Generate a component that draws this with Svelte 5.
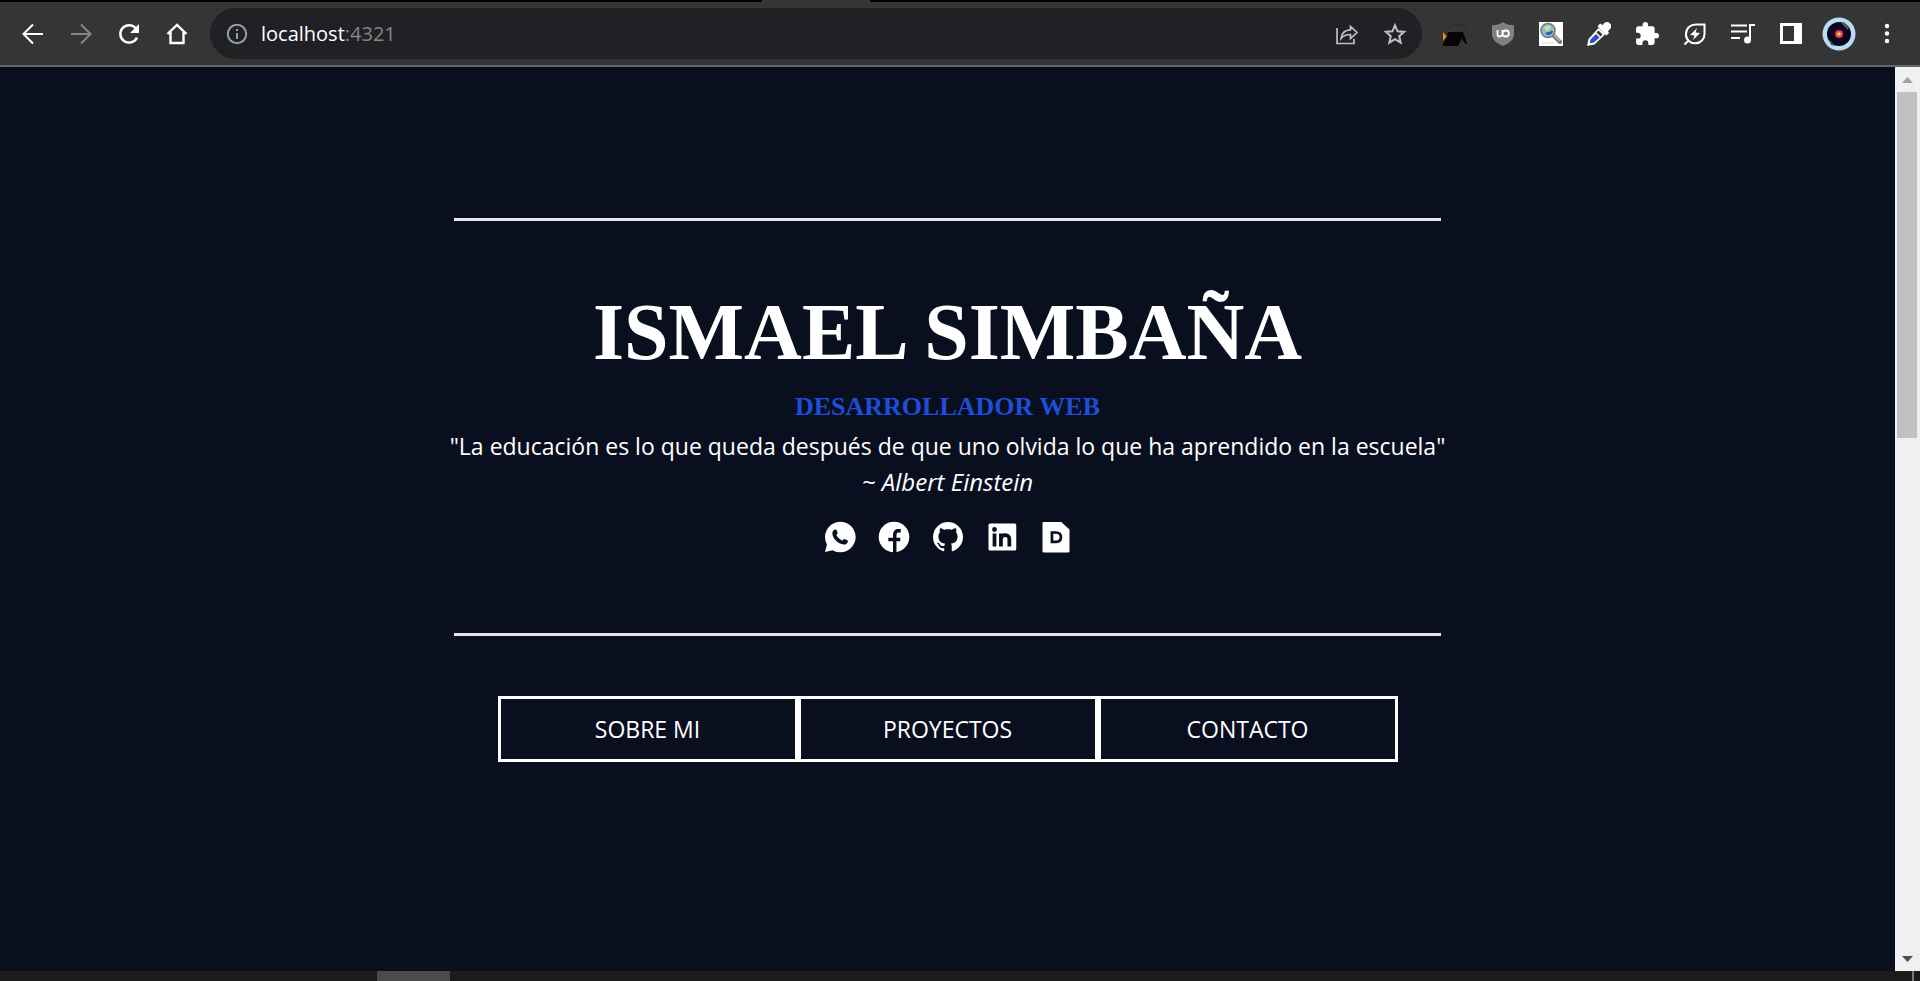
<script>
  const sections = ['SOBRE MI', 'PROYECTOS', 'CONTACTO'];
</script>

<div class="window">
  <div class="tabs"><span></span></div>
  <header class="toolbar">
    <button class="tool" aria-label="Atrás">
      <svg viewBox="0 0 24 24" class="line"><path d="M22 12H3M12 2.500 2.500 12l9.500 9.500" /></svg>
    </button>
    <button class="tool dim" aria-label="Adelante">
      <svg viewBox="0 0 24 24" class="line"><path d="M2 12h19M12 2.500 21.500 12 12 21.500" /></svg>
    </button>
    <button class="tool" aria-label="Recargar">
      <svg viewBox="0 0 24 24" class="line"><path d="M20 15.500A8.700 8.700 0 1 1 18.500 6" stroke-width="2.500" /><path d="M22 2v9h-9z" fill="currentColor" stroke="none" /></svg>
    </button>
    <button class="tool" aria-label="Inicio">
      <svg viewBox="0 0 24 24" class="line"><path d="M2.500 12 12 3l9.500 9M5.500 10v11h13V10" stroke-width="2.400" /></svg>
    </button>

    <div class="address">
      <svg viewBox="0 0 24 24" class="line info"><circle cx="12" cy="12" r="9.200" /><path d="M12 11v6M12 7v2" /></svg>
      <a href="http://localhost:4321">localhost<span>:4321</span></a>
      <button class="tool soft" aria-label="Compartir">
        <svg viewBox="0 0 24 24" class="line"><path d="M2 7v15.500h17V18M6 17.500c.6-5.500 4-8.500 9.500-8.700V5.500l6.500 6-6.500 6v-4C11.500 13.500 8.500 14.500 6 17.500z" stroke-width="1.700" transform="translate(0 -1)" /></svg>
      </button>
      <button class="tool soft" aria-label="Marcador">
        <svg viewBox="0 0 24 24" class="line"><path d="m12 3.300 2.600 6 6.500.600-4.900 4.300 1.500 6.400-5.700-3.400-5.700 3.400 1.500-6.400-4.900-4.300 6.500-.600z" stroke-width="2" /></svg>
      </button>
    </div>

    <button class="tool" aria-label="Extensión">
      <svg viewBox="0 0 24 24"><path d="M0 10l3.500 4.500L0 19z" fill="#f5870a" /><path d="M0 24v-3l4.500-7V10.500L6 10h14l4 11v1l-1.500-.5-4-5L15 24z" fill="#050505" /><path d="M2 10 10 2l10 1 3 7" stroke="#2b2b2b" fill="none" /></svg>
    </button>
    <button class="tool" aria-label="uBlock">
      <svg viewBox="0 0 24 24"><path d="M12 0c3 2.500 6.500 3.200 11 3.200V12c0 5.500-4 9-11 12C5 21 1 17.500 1 12V3.200C5.500 3.200 9 2.500 12 0z" fill="#808080" /><path d="M6.500 8v4.200q0 2.300 2.300 2.300t2.700-2.300V8M11.500 11.500q0-3 3.200-3t3.200 3-3.200 3-3.200-3z" fill="none" stroke="#fff" stroke-width="1.800" /></svg>
    </button>
    <button class="tool" aria-label="Buscar imagen">
      <svg viewBox="0 0 24 24"><path fill="#fff" d="M0 0h24v24H0z" /><path d="m14 13 7 7" stroke="#777" stroke-width="4" stroke-linecap="round" /><path d="m15 13 6 6" stroke="#bbb" stroke-width="1.500" /><circle cx="9" cy="8.500" r="7" fill="#8fb9d8" stroke="#777" stroke-width="1.500" /><path d="M5 5q4-3 7 0l-2 3-3 1z" fill="#cce38e" /><path d="M7 11q4 2 6-2" stroke="#245fa8" stroke-width="2.500" fill="none" /><path d="M2 21h13" stroke="#ddd" /></svg>
    </button>
    <button class="tool" aria-label="Cuentagotas">
      <svg viewBox="0 0 24 24"><path d="M13 1.500 15.500 3l2-2.300Q20.500-.8 23 1.500t.5 5L21 9l1 2-2.500 2.500-9-9z" fill="#fff" /><path d="M11.500 6 1.500 17 0 24l7.500-1.500L18.500 12z" fill="#fff" /><path d="m11.500 8.500 4 4-2 2-4-4z" fill="#353535" /><path d="m9 12 3.500 3.500L7 20.500l-3.500.8-.7-.7.7-3.100z" fill="#3049c9" /></svg>
    </button>
    <button class="tool" aria-label="Extensiones">
      <svg viewBox="1 1 22 22"><path fill="currentColor" d="M20.500 11H19V7c0-1.100-.9-2-2-2h-4V3.500a2.500 2.500 0 0 0-5 0V5H4c-1.100 0-2 .9-2 2v3.800h1.500a2.700 2.700 0 0 1 0 5.400H2V20c0 1.100.9 2 2 2h3.800v-1.500a2.700 2.700 0 0 1 5.400 0V22H17c1.100 0 2-.9 2-2v-4h1.500a2.500 2.500 0 0 0 0-5z" /></svg>
    </button>
    <button class="tool" aria-label="Ahorro de energía">
      <svg viewBox="0 0 24 24" class="line"><path d="M21.500 2.500V12a9 9 0 0 1-9 9.300A8.800 8.800 0 0 1 3 12c0-6 4.500-9.500 10-9.500zM5.500 18.500 1.500 22.500" /><path d="m14 6-7 7 4.500.500L10 18l7-7-4.500-.5z" fill="currentColor" stroke="none" /></svg>
    </button>
    <button class="tool" aria-label="Multimedia">
      <svg viewBox="0 0 24 24" class="line"><path d="M0 3.500h16M0 9.500h16M0 16h9M19 19V3h5" /><circle cx="16.500" cy="18" r="3.500" fill="currentColor" stroke="none" /></svg>
    </button>
    <button class="tool" aria-label="Panel lateral">
      <svg viewBox="0 0 24 24"><path fill="currentColor" fill-rule="evenodd" d="M1 1h22v21H1zm3 3v15h11V4z" /></svg>
    </button>
    <button class="tool" aria-label="Perfil">
      <svg viewBox="0 0 34 34" class="avatar"><circle cx="17" cy="17" r="16.500" fill="#b7dcf8" /><circle cx="17" cy="17" r="12" fill="#090416" /><path d="m19 6 3-.7 5 5-1 3zM7 22l2 6 4 1z" fill="#57505a" /><circle cx="17" cy="17" r="9" fill="#0b0720" /><circle cx="17" cy="17" r="4" fill="#e8375f" /><circle cx="17" cy="17" r="1.800" fill="#ffd83a" /></svg>
    </button>
    <button class="tool" aria-label="Menú">
      <svg viewBox="0 0 24 24" fill="currentColor"><circle cx="12" cy="4" r="2.200" /><circle cx="12" cy="11.500" r="2.200" /><circle cx="12" cy="19" r="2.200" /></svg>
    </button>
  </header>

  <div class="view">
    <main>
      <section class="hero">
        <h1>ISMAEL SIMBAÑA</h1>
        <h2>DESARROLLADOR WEB</h2>
        <p>"La educación es lo que queda después de que uno olvida lo que ha aprendido en la escuela"</p>
        <p><em>~ Albert Einstein</em></p>
        <div class="social">
          <a href="#whatsapp" aria-label="WhatsApp">
            <svg viewBox="0 0 24 24"><path fill="#fff" d="m2 22 1.300-5A10.200 10.200 0 1 1 7 20.800z" /><path fill="#0a0f20" d="M8.200 7.200 9 7c.5 0 .7.300.8.700l.6 1.600c.1.500-.9 1.200-.8 1.600a7.500 7.500 0 0 0 3.700 3.500c.5.100 1.100-1.200 1.600-1.100l2 .900c.4.200.4.500.3.900-.3 1.500-1.600 2-2.700 1.900-4-.4-7.500-4-7.600-7.300 0-1.100.5-2.100 1.300-2.500z" /></svg>
          </a>
          <a href="#facebook" aria-label="Facebook">
            <svg viewBox="0 0 24 24"><circle cx="12" cy="12" r="10.200" fill="#fff" /><path d="M12.500 23V10.500q0-2.700 2.600-2.700h1.400M8.200 13.600h8" fill="none" stroke="#0a0f20" stroke-width="2.300" /></svg>
          </a>
          <a href="#github" aria-label="GitHub">
            <svg viewBox="0 0 24 24"><path fill="#fff" d="M12 2A10 10 0 0 0 2 12c0 4.420 2.870 8.170 6.840 9.500.5.080.66-.23.66-.5v-1.690c-2.770.6-3.360-1.340-3.360-1.340-.46-1.160-1.110-1.470-1.110-1.470-.91-.62.070-.6.070-.6 1 .070 1.530 1.030 1.530 1.030.87 1.520 2.340 1.070 2.910.83.090-.65.350-1.090.63-1.340-2.220-.25-4.550-1.110-4.550-4.920 0-1.110.38-2 1.030-2.710-.1-.25-.45-1.290.1-2.640 0 0 .84-.27 2.750 1.020.79-.22 1.650-.33 2.500-.33.850 0 1.710.11 2.500.33 1.910-1.290 2.750-1.020 2.750-1.020.55 1.350.2 2.390.1 2.640.65.71 1.030 1.600 1.030 2.710 0 3.820-2.340 4.660-4.570 4.910.36.31.69.92.69 1.850V21c0 .27.16.59.67.5C19.140 20.160 22 16.420 22 12A10 10 0 0 0 12 2z" /></svg>
          </a>
          <a href="#linkedin" aria-label="LinkedIn">
            <svg viewBox="0 0 24 24"><rect x="3" y="3" width="18.500" height="18" rx="1" fill="#fff" /><circle cx="7" cy="7" r="1.600" fill="#0a0f20" /><path d="M7 9.700v8.600M11.300 18.300V9.700M11.300 13.500q0-2.700 2.800-2.700t2.800 2.700v4.800" fill="none" stroke="#0a0f20" stroke-width="2.500" /></svg>
          </a>
          <a href="#curriculum" aria-label="Documento">
            <svg viewBox="0 0 24 24"><path fill="#fff" d="M3.500 2h12l5.500 5v14.300a1 1 0 0 1-1 1H4a1 1 0 0 1-1-1V2.500z" /><path fill="none" stroke="#0a0f20" stroke-width="1.800" d="M9.300 9h2.500q3.500 0 3.500 3.100t-3.500 3.100H9.300z" /></svg>
          </a>
        </div>
      </section>
      <nav>
        {#each sections as name}
          <a href="#{name.toLowerCase().replace(' ', '-')}">{name}</a>
        {/each}
      </nav>
    </main>
    <div class="scroll">
      <svg viewBox="0 0 25 25"><path d="M7 16h11l-5.500-6z" fill="#a3a3a3" /></svg>
      <div class="track"><span></span></div>
      <svg viewBox="0 0 25 25"><path d="M7 10h11l-5.500 6z" fill="#505050" /></svg>
    </div>
  </div>
  <footer><span class="active"></span><span class="edge"></span></footer>
</div>

<style>
  :global(body) { margin: 0; background: #0a0f20; }
  .window {
    display: flex;
    flex-direction: column;
    height: 100vh;
    overflow: hidden;
    font-family: "Open Sans", "Noto Sans", sans-serif;
    color: #fff;
  }
  a { color: inherit; text-decoration: none; }
  .tabs { flex: none; height: 2px; background: #000; display: flex; }
  .tabs span { width: 108px; margin-left: 762px; background: #353535; }
  .toolbar {
    flex: none;
    box-sizing: border-box;
    height: 65px;
    display: flex;
    align-items: center;
    padding: 0 9px;
    background: #353535;
    border-bottom: 2px solid #666;
  }
  .tool {
    flex: none;
    width: 48px;
    height: 48px;
    padding: 0;
    border: 0;
    background: none;
    color: #fff;
    display: flex;
    align-items: center;
    justify-content: center;
  }
  .tool svg { width: 24px; height: 24px; }
  .tool .avatar { width: 34px; height: 34px; }
  .dim { color: #868686; }
  .soft { color: #bdc1c6; }
  .line { fill: none; stroke: currentColor; stroke-width: 2; }
  .address {
    flex: 1;
    box-sizing: border-box;
    height: 51px;
    margin: 0 9px;
    padding: 0 3px 0 15px;
    border-radius: 26px;
    background: #202124;
    display: flex;
    align-items: center;
    font-size: 20px;
  }
  .address a { flex: 1; margin-left: 12px; }
  .address span { color: #868686; }
  .info { width: 24px; height: 24px; color: #9aa0a6; }
  .view { flex: 1; display: flex; min-height: 0; }
  main {
    flex: 1;
    display: flex;
    flex-direction: column;
    align-items: center;
    padding-top: 151px;
  }
  .hero {
    box-sizing: border-box;
    width: 987px;
    max-width: 100%;
    display: flex;
    flex-direction: column;
    align-items: center;
    border: solid #e5e7eb;
    border-width: 3px 0;
    padding: 57px 0 78px;
    white-space: nowrap;
  }
  h1, h2 { margin: 0; font-family: "Liberation Serif", serif; font-weight: 700; }
  h1 { font-size: 80px; line-height: 108px; }
  h2 { font-size: 26px; line-height: 42px; color: #1d4ed8; }
  p { margin: 0; font-size: 23px; line-height: 36px; }
  em { font-size: 24px; }
  .social { display: flex; gap: 18px; margin-top: 19px; }
  .social svg { display: block; width: 36px; height: 36px; }
  nav { display: flex; width: 900px; max-width: 100%; margin-top: 60px; }
  nav a {
    flex: 1;
    border: 3px solid #fff;
    text-align: center;
    font-size: 23px;
    line-height: 60px;
  }
  .scroll { flex: none; width: 25px; background: #f0f0f0; display: flex; flex-direction: column; }
  .scroll svg { width: 25px; height: 25px; }
  .track { flex: 1; padding: 0 3px 0 2px; }
  .track span { display: block; height: 40.5%; background: #c1c1c1; }
  footer { flex: none; height: 10px; background: #1b1b1b; display: flex; justify-content: space-between; }
  .active { width: 73px; margin-left: 377px; background: #4b4b4b; }
  .edge { width: 2px; margin-right: 6px; background: #777; }
</style>
